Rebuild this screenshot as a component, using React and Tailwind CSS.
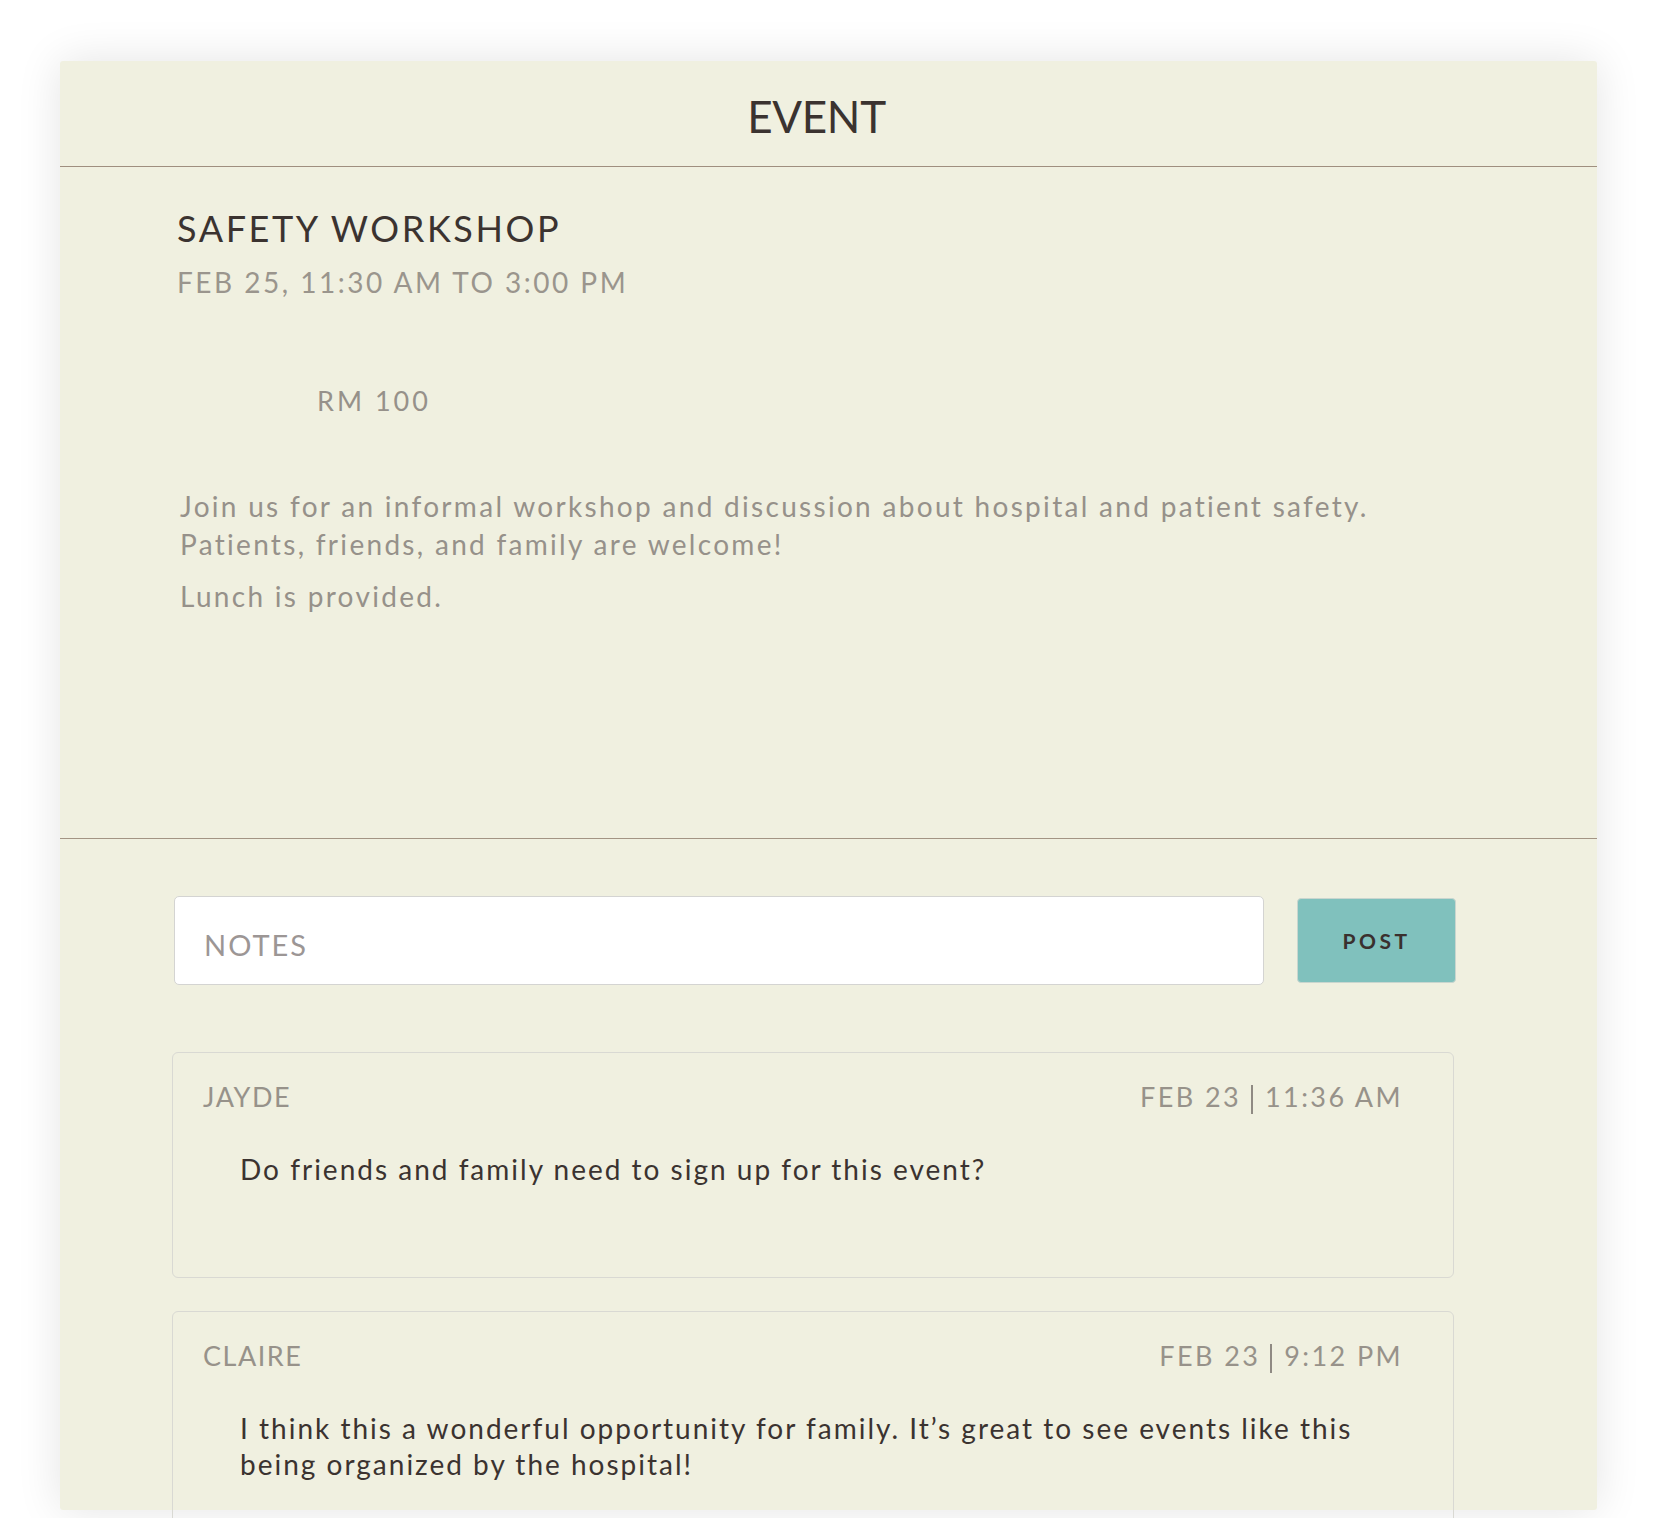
import React from 'react';

const font = { fontFamily: 'Lato, "Open Sans", sans-serif' };

const comments = [
  {
    name: 'JAYDE',
    date: 'FEB 23',
    time: '11:36 AM',
    text: ['Do friends and family need to sign up for this event?'],
  },
  {
    name: 'CLAIRE',
    date: 'FEB 23',
    time: '9:12 PM',
    text: [
      'I think this a wonderful opportunity for family. It\u2019s great to see events like this',
      'being organized by the hospital!',
    ],
  },
];

const Comment = ({ comment }) => (
  <div className="min-h-[226px] border border-[#d9d9d3] rounded-[6px] pt-[28px] pl-[30px] pr-[50px] pb-[30px]">
    <div className="h-[32px] flex justify-between text-[27px] leading-[32px] text-[#97928a]">
      <span className="tracking-[1.5px]">{comment.name}</span>
      <span className="tracking-[2.4px] whitespace-nowrap">
        {comment.date}
        <span className="inline-block align-[-7px] ml-[10px] mr-[12px] w-[2px] h-[29px] bg-[#8f8a83]" />
        {comment.time}
      </span>
    </div>
    <p className="mt-[38px] pl-[37px] text-[28px] leading-[36px] tracking-[2px] text-[#3b3330]">
      {comment.text.map((line, i) => (
        <React.Fragment key={i}>
          {i > 0 && <br />}
          {line}
        </React.Fragment>
      ))}
    </p>
  </div>
);

export default function App() {
  return (
    <div className="min-h-screen bg-white pt-[61px] px-[60px] overflow-hidden" style={font}>
      <div className="w-[1537px] h-[1449px] bg-[#f0f0e0] rounded-[3px] shadow-[0_0_45px_rgba(0,0,0,0.11)]">
        {/* Header */}
        <div className="h-[106px] flex items-center justify-center border-b border-[#9f8f7f]">
          <h1 className="text-[44px] leading-none tracking-[-0.3px] pt-[4px] mr-[24px] text-[#3b3330]">EVENT</h1>
        </div>

        {/* Event details */}
        <div className="h-[672px] border-b border-[#a39484] pt-[40px] px-[117px]">
          <h2 className="text-[36px] leading-[1.2] tracking-[2.6px] text-[#3b3330]">SAFETY WORKSHOP</h2>
          <p className="mt-[16px] text-[28px] leading-[1.2] tracking-[2.5px] text-[#9a958d]">
            FEB 25, 11:30 AM TO 3:00 PM
          </p>
          <p className="mt-[85px] pl-[140px] text-[27px] leading-[1.2] tracking-[3px] text-[#96918a]">RM 100</p>
          <div className="mt-[68px] ml-[3px] text-[28px] leading-[38px] tracking-[2.3px] text-[#96918a]">
            <p className="pt-[2px]">
              Join us for an informal workshop and discussion about hospital and patient safety.
              <br />
              Patients, friends, and family are welcome!
            </p>
            <p className="mt-[14px]">Lunch is provided.</p>
          </div>
        </div>

        {/* Notes */}
        <div className="pt-[57px] pl-[114px] pr-[141px]">
          <div className="flex items-center gap-[33px]">
            <input
              type="text"
              placeholder="NOTES"
              className="w-[1090px] h-[89px] bg-white border border-[#d4d4d2] rounded-[5px] pl-[29px] pt-[7px] text-[29px] tracking-[2px] text-[#3b3330] placeholder:text-[#9c9695] outline-none"
              style={font}
            />
            <button className="w-[159px] h-[85px] bg-[#80c1bd] border border-[#c9d6cf] rounded-[4px] text-[21px] font-bold tracking-[3.5px] text-[#3a302e]">
              POST
            </button>
          </div>

          <div className="mt-[67px] w-[1282px] -ml-[2px] flex flex-col gap-[33px]">
            {comments.map((c) => (
              <Comment key={c.name} comment={c} />
            ))}
          </div>
        </div>
      </div>
    </div>
  );
}
